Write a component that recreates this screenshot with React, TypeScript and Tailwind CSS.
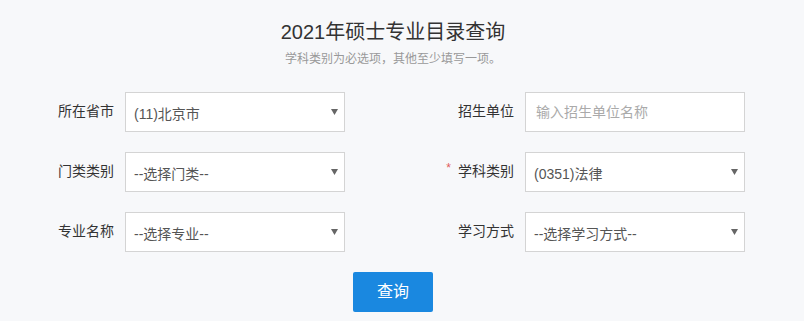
import React from "react";

const Arrow = () => (
  <svg width="7" height="6" viewBox="0 0 7 6" className="shrink-0">
    <path d="M0 0 H7 L3.5 6 Z" fill="#666" />
  </svg>
);

function Field({
  label,
  star,
  children,
}: {
  label: string;
  star?: boolean;
  children: React.ReactNode;
}) {
  return (
    <div className="flex items-center h-10">
      <div className="w-[115px] pr-[1px] flex justify-end items-center text-[14px] leading-[20px] text-[#333] -mt-[2px]">
        {star && <span className="text-[#e05a5a] text-[12px] mr-[7px] -mt-[6px]">*</span>}
        <span>{label}</span>
      </div>
      <div className="ml-[10px] w-[220px] h-10 bg-white border border-[#d4d4d4]">{children}</div>
    </div>
  );
}

function Select({ value }: { value: string }) {
  return (
    <div className="h-full flex items-center justify-between pl-[8px] pr-[6px]">
      <span className="text-[14px] leading-[20px] text-[#555] mt-[3px]">{value}</span>
      <Arrow />
    </div>
  );
}

export default function App() {
  return (
    <div
      className="w-[804px] h-[321px] bg-[#f7f8fa] overflow-hidden"
      style={{ fontFamily: '"Liberation Sans", "Noto Sans CJK SC", sans-serif' }}
    >
      <div className="w-[786px] flex flex-col items-center pt-[17px]">
        <div className="text-[20px] leading-[30px] text-[#333]">2021年硕士专业目录查询</div>
        <div className="mt-[4px] text-[12px] leading-[16px] text-[#999]">
          学科类别为必选项，其他至少填写一项。
        </div>
      </div>
      <div className="mt-[25px] grid grid-cols-[400px_400px] gap-y-5">
        <Field label="所在省市">
          <Select value="(11)北京市" />
        </Field>
        <Field label="招生单位">
          <div className="h-full flex items-center pl-[10px]">
            <span className="text-[14px] leading-[20px] text-[#aaa]">输入招生单位名称</span>
          </div>
        </Field>
        <Field label="门类类别">
          <Select value="--选择门类--" />
        </Field>
        <Field label="学科类别" star>
          <Select value="(0351)法律" />
        </Field>
        <Field label="专业名称">
          <Select value="--选择专业--" />
        </Field>
        <Field label="学习方式">
          <Select value="--选择学习方式--" />
        </Field>
      </div>
      <div className="w-[786px] flex justify-center mt-5">
        <button className="w-20 h-10 rounded-[2px] bg-[#1a88e0] text-white text-[16px] leading-[20px]">
          查询
        </button>
      </div>
    </div>
  );
}
